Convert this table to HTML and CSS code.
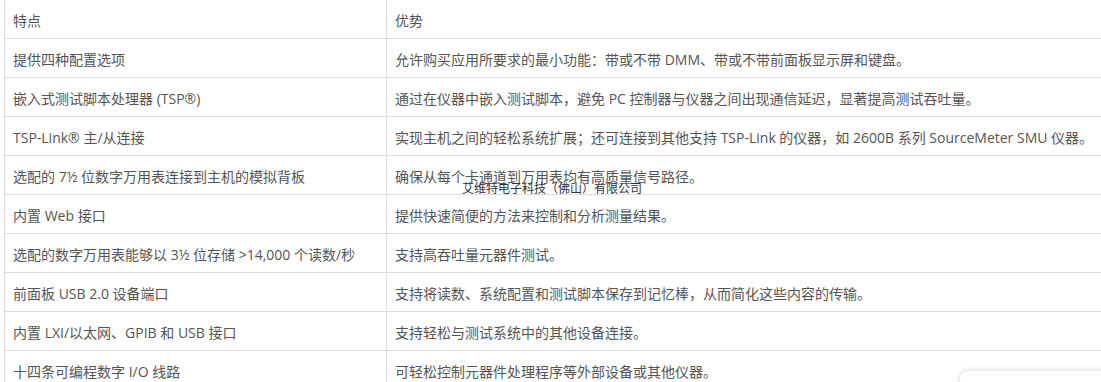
FILE: index.html
```html
<!DOCTYPE html>
<html lang="zh-CN">
<head>
<meta charset="utf-8">
<title>特点与优势</title>
<link rel="stylesheet" href="styles.css">
</head>
<body>
<div class="page">
  <table class="spec">
    <tr><td class="c1">特点</td><td>优势</td></tr>
    <tr><td class="c1">提供四种配置选项</td><td>允许购买应用所要求的最小功能：带或不带 DMM、带或不带前面板显示屏和键盘。</td></tr>
    <tr><td class="c1">嵌入式测试脚本处理器 (TSP®)</td><td>通过在仪器中嵌入测试脚本，避免 PC 控制器与仪器之间出现通信延迟，显著提高测试吞吐量。</td></tr>
    <tr><td class="c1">TSP-Link® 主/从连接</td><td>实现主机之间的轻松系统扩展；还可连接到其他支持 TSP-Link 的仪器，如 2600B 系列 SourceMeter SMU 仪器。</td></tr>
    <tr><td class="c1">选配的 7½ 位数字万用表连接到主机的模拟背板</td><td>确保从每个卡通道到万用表均有高质量信号路径。</td></tr>
    <tr><td class="c1">内置 Web 接口</td><td>提供快速简便的方法来控制和分析测量结果。</td></tr>
    <tr><td class="c1">选配的数字万用表能够以 3½ 位存储 &gt;14,000 个读数/秒</td><td>支持高吞吐量元器件测试。</td></tr>
    <tr><td class="c1">前面板 USB 2.0 设备端口</td><td>支持将读数、系统配置和测试脚本保存到记忆棒，从而简化这些内容的传输。</td></tr>
    <tr><td class="c1">内置 LXI/以太网、GPIB 和 USB 接口</td><td>支持轻松与测试系统中的其他设备连接。</td></tr>
    <tr><td class="c1">十四条可编程数字 I/O 线路</td><td>可轻松控制元器件处理程序等外部设备或其他仪器。</td></tr>
  </table>
  <div class="watermark">艾维特电子科技（佛山）有限公司</div>
  <div class="float-card"></div>
</div>
</body>
</html>
```

FILE: styles.css
```css
html, body {
  margin: 0;
  padding: 0;
  background: #fff;
  overflow: hidden;
}
.page {
  position: relative;
  width: 1101px;
  height: 382px;
  overflow: hidden;
  padding-left: 4px;
  box-sizing: border-box;
}
.spec {
  border-collapse: collapse;
  width: 1110px;
  margin-top: -1px;
  font-family: "Open Sans", "Noto Sans CJK SC", sans-serif;
  font-size: 14px;
  color: #555;
}
.spec td {
  border: 1px solid #ddd;
  height: 39px;
  padding: 3px 8px 0;
  box-sizing: border-box;
  white-space: nowrap;
  vertical-align: middle;
  line-height: 18px;
}
.spec td.c1 {
  width: 382px;
}
.watermark {
  position: absolute;
  left: 462px;
  top: 181px;
  font-family: "Noto Sans CJK SC", sans-serif;
  font-size: 12px;
  line-height: 14px;
  color: #333;
}
.float-card {
  position: absolute;
  left: 960px;
  top: 371px;
  width: 200px;
  height: 60px;
  background: #fff;
  border-radius: 8px;
  box-shadow: 0 0 6px rgba(0, 0, 0, 0.18);
}
```
